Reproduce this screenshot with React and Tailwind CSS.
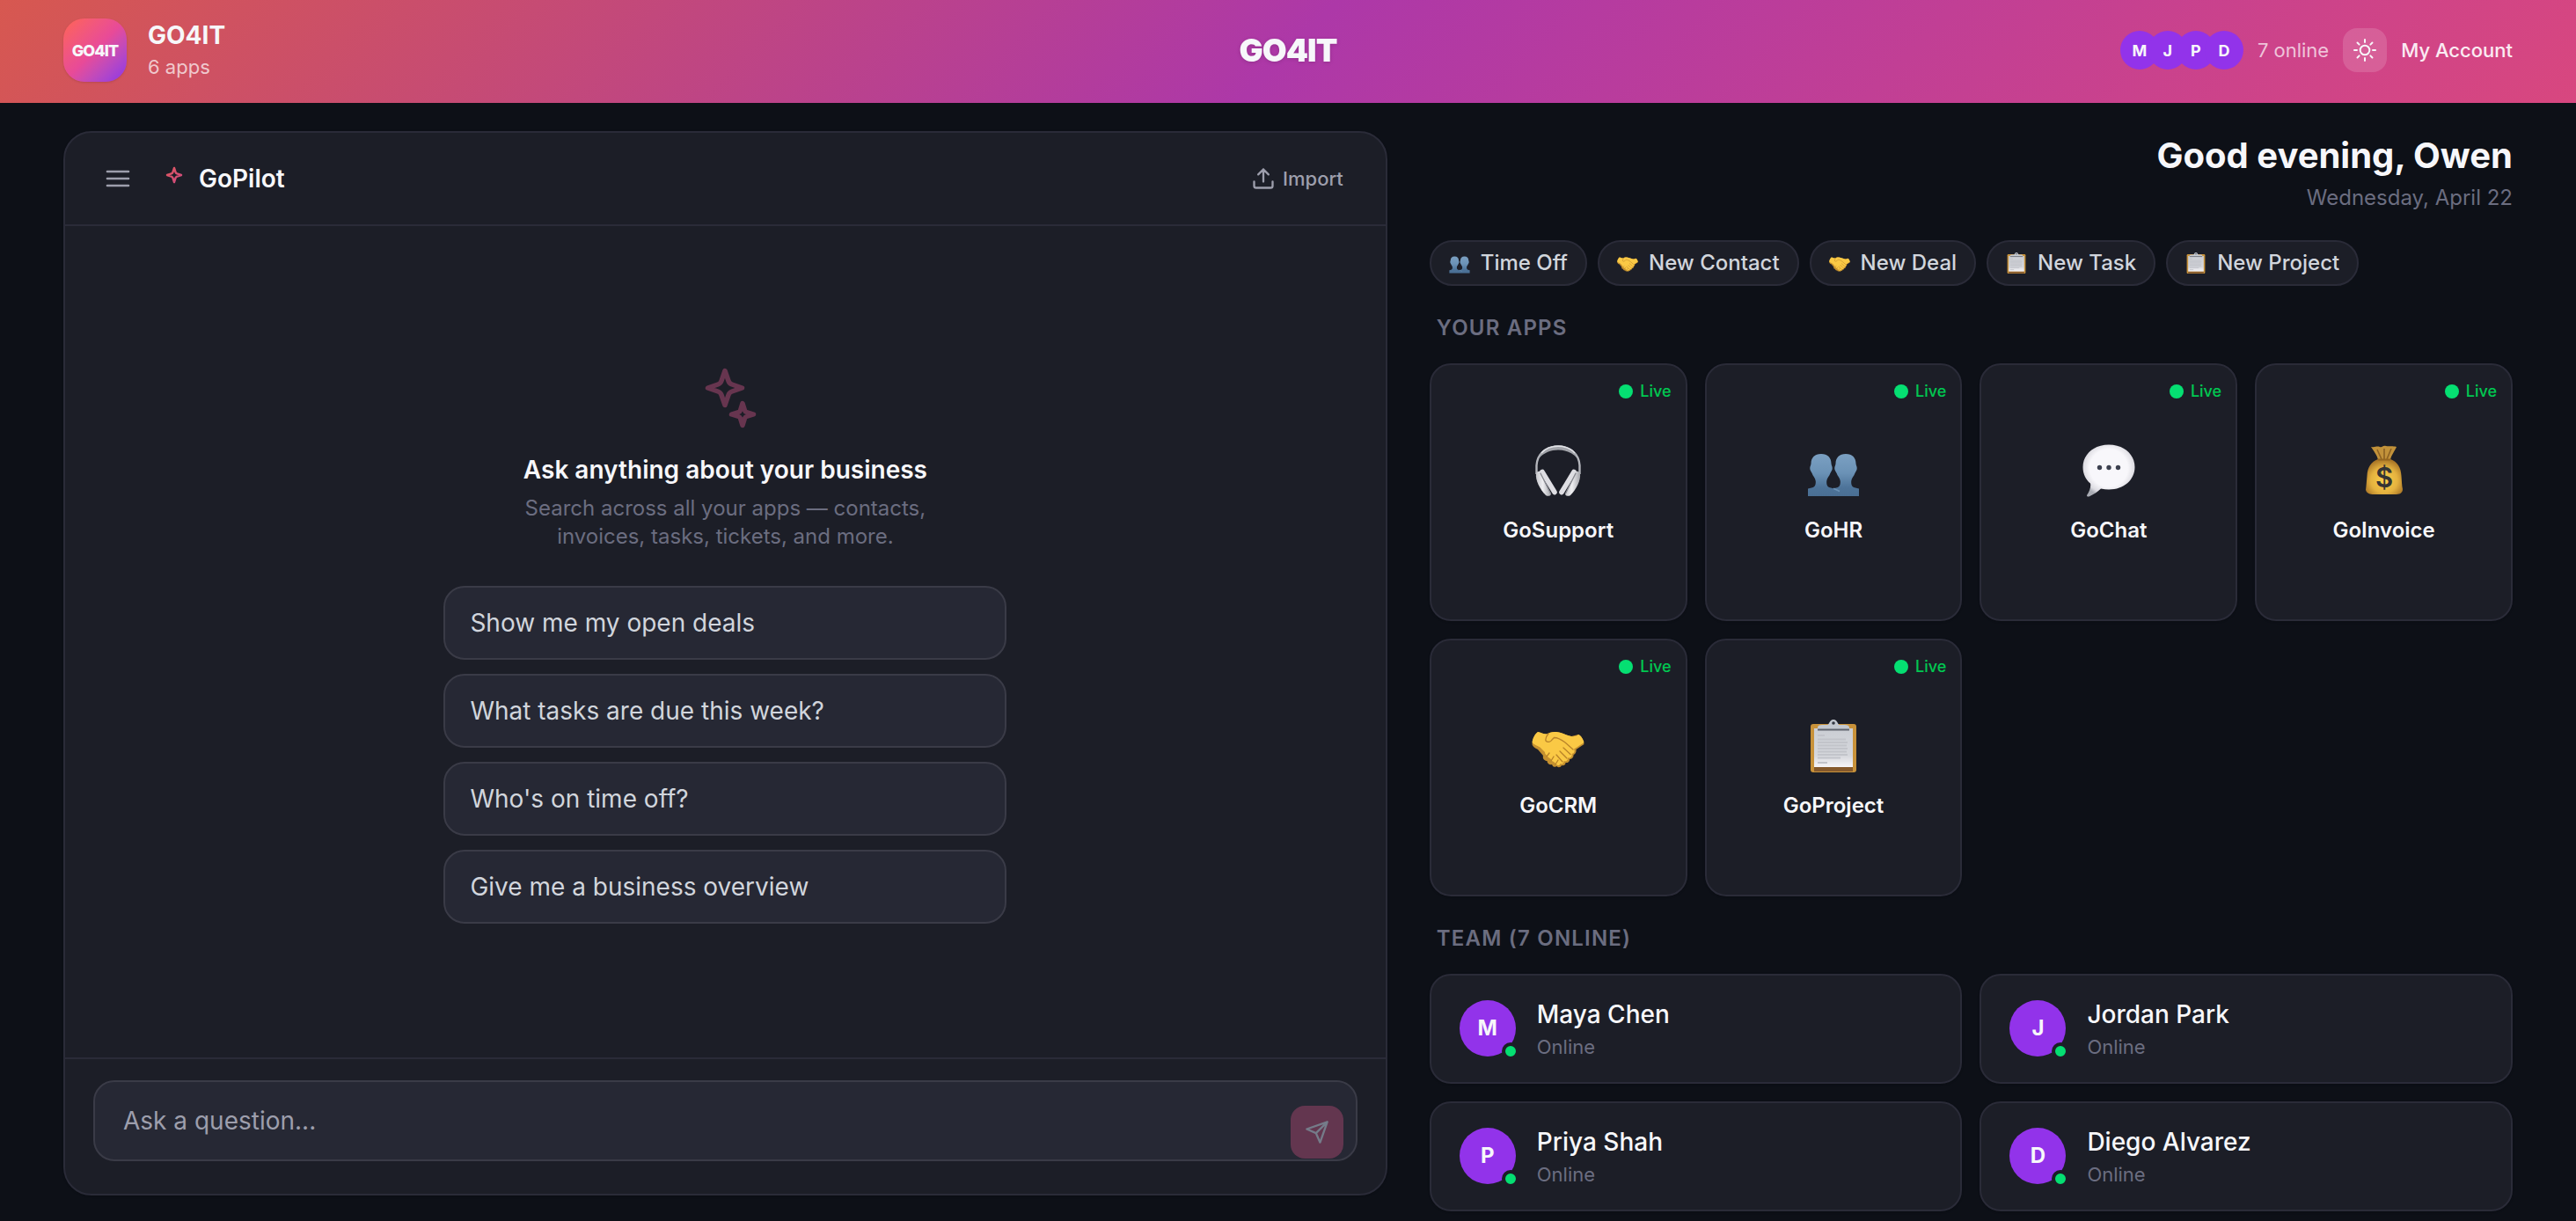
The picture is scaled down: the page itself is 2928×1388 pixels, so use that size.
import React, { useState } from 'react';

/* App artwork */

const PeopleIcon = ({ className }) => (
  <svg viewBox="0 0 60 60" className={className} aria-hidden="true">
    <defs>
      <linearGradient id="people" x1="0" y1="0" x2="0" y2="1">
        <stop offset="0" stopColor="#7ba0c2" />
        <stop offset="0.45" stopColor="#6b92b6" />
        <stop offset="0.8" stopColor="#4d7399" />
        <stop offset="1" stopColor="#4a6f94" />
      </linearGradient>
    </defs>
    <path
      d="M16 11C8.500 11 4.500 15.500 4.500 22C4.500 24 3 25 3.300 28C3.500 30 4.800 31 5.600 33C6.500 36 9.500 38.500 9.800 42C10 47 8.500 48.500 6 49.300L1 50.500V59H59V50.500L54 49.300C51.500 48.500 50 47 50.200 42C50.500 38.500 53.500 36 54.400 33C55.200 31 56.500 30 56.700 28C57 25 55.500 24 55.500 22C55.500 15.500 51.500 11 44 11C36.500 11 32.500 15.500 32.500 22C32.500 24 31 25 31.300 28C31.500 30 32.800 31 33.600 33C34.500 36 37.500 38.500 37.800 42C38 47 36.500 48.500 34 49.300L30 50.300L26 49.300C23.500 48.500 22 47 22.200 42C22.500 38.500 25.500 36 26.400 33C27.200 31 28.500 30 28.700 28C29 25 27.500 24 27.500 22C27.500 15.500 23.500 11 16 11Z"
      fill="url(#people)"
    />
    <path d="M30 50.300L37 53.500" stroke="#6b92b6" strokeWidth="1.500" />
  </svg>
);

const HandshakeIcon = ({ className }) => (
  <svg viewBox="0 0 60 60" className={className} aria-hidden="true">
    <path
      d="M7 14C4 16 1 22 0.500 28C1 31 5 33 7 34L13 41C12 45 15 47 17.500 47C17.500 50 20.500 52 23 51C24 54 27 54.500 28.500 53C30 55 33 54.500 34 52C36 53 38.500 51.500 38.500 49C41.500 49.500 43.500 47 43 45C46 45 48 42.500 47.500 40C50 39.500 51 36 50.500 34L59.500 28C59 23 56 18 53 17L45 19C40 18 35 15 28 14C23 13.500 20 15 17 16.500C14 16.500 11 15 7 14Z"
      fill="#c4902f"
    />
    <path
      d="M7 14C4 16 1 21 0.500 26C3 29 8 30 10 32L15 37C15 40 17 40 18 42C20 44 22 44 23 47C25 48 27 49 28 51C30 53 32 52 32.500 50C35 51 37 49.500 36.500 47C39 48 41.500 46 41 43.500C44 44 46.500 41.500 45.500 39C48 39 49.500 36 48 33.500L52 31L59.500 26C58.500 22 56 18 53 17C51 19 48 19.500 45 19C40 18 35 15 28 14C23 13.500 20 15 17 16.500C14 16.500 11 15 7 14Z"
      fill="#fac945"
    />
    <path
      d="M19 16C16.500 19 15.500 22 16 24C18 26.500 21.500 25.500 23 23L25.500 20.500C30 20.500 34 23 38 26L47 34M36 32L44 39.500M32 36L40 44M28 40L35 48M17 42L20 38M22 47L25 42M27 51L30 46"
      fill="none"
      stroke="#b98329"
      strokeWidth="1.300"
      strokeLinecap="round"
    />
  </svg>
);

const ClipboardIcon = ({ className }) => (
  <svg viewBox="0 0 60 60" className={className} aria-hidden="true">
    <defs>
      <linearGradient id="paper" x1="0" y1="0" x2="0" y2="1">
        <stop offset="0" stopColor="#cbced4" />
        <stop offset="0.7" stopColor="#d5d7dc" />
        <stop offset="1" stopColor="#f6f5f8" />
      </linearGradient>
    </defs>
    <rect x="4" y="5" width="52" height="55" rx="3" fill="#c8923a" />
    <path d="M8 54H52V59H8Z" fill="#85592c" />
    <rect x="8" y="10" width="44" height="44" fill="url(#paper)" />
    <path d="M12 18H20M12 22.500H44M12 26H46M12 29.500H45M12 33H46M12 36.500H45M12 40H46M12 43.500H38M12 49H23" stroke="#c2c4ca" strokeWidth="2.200" />
    <path d="M12 12V9C12 7 14 6 17 6H23C25.500 6 25 0 30 0C35 0 34.500 6 37 6H43C46 6 48 7 48 9V12Z" fill="#c3c8d0" />
    <path d="M12 11.500H48" stroke="#60656f" strokeWidth="2" />
    <circle cx="30" cy="4" r="1.800" fill="#343842" />
  </svg>
);

const HeadphonesIcon = ({ className }) => (
  <svg viewBox="0 0 60 60" className={className} aria-hidden="true">
    <defs>
      <linearGradient id="cup" x1="0" y1="0" x2="1" y2="0">
        <stop offset="0" stopColor="#c4c5ca" />
        <stop offset="0.45" stopColor="#efeff2" />
        <stop offset="1" stopColor="#a4a5ab" />
      </linearGradient>
    </defs>
    <path d="M5.500 34V24C6.500 10.500 17 2.500 30 2.500C43 2.500 53.500 10.500 54.500 24V34" fill="none" stroke="#b4b6bc" strokeWidth="2.400" />
    <path d="M8 16C12 6 21 1.200 30 1.200C39 1.200 48 6 52 16C46 9.500 38 6.500 30 6.500C22 6.500 14 9.500 8 16Z" fill="#a2a4aa" />
    <path d="M11 10C16 4.500 23 2.300 30 2.300C37 2.300 44 4.500 49 10" fill="none" stroke="#e2e3e7" strokeWidth="1.600" />
    <path d="M5 34C4 40 9 51 16 58C18 59.500 21 59 22 57L10 31C8 30 5.500 31 5 34Z" fill="url(#cup)" />
    <path d="M12 31.500L26 54.500" stroke="#dedee3" strokeWidth="5.600" strokeLinecap="round" />
    <path d="M10 33L21.500 56" stroke="#85878e" strokeWidth="1.300" strokeLinecap="round" />
    <path d="M55 34C56 40 51 51 44 58C42 59.500 39 59 38 57L50 31C52 30 54.500 31 55 34Z" fill="url(#cup)" />
    <path d="M48 31.500L34 54.500" stroke="#dedee3" strokeWidth="5.600" strokeLinecap="round" />
    <path d="M50 33L38.500 56" stroke="#85878e" strokeWidth="1.300" strokeLinecap="round" />
  </svg>
);

const ChatIcon = ({ className }) => (
  <svg viewBox="0 0 60 60" className={className} aria-hidden="true">
    <defs>
      <radialGradient id="bubble" cx="0.5" cy="0.45" r="0.56">
        <stop offset="0.65" stopColor="#f8f7fb" />
        <stop offset="0.88" stopColor="#dddce2" />
        <stop offset="1" stopColor="#a9acb4" />
      </radialGradient>
    </defs>
    <path
      d="M30 0.500C13 0.500 0.500 11.500 0.500 26C0.500 34 4 40.500 9 44.500C10 48 8 54 5 58C5 59.500 6.500 59.800 8 59.200C13 57 18 53.500 21 50.500C24 51.200 27 51.500 30 51.500C47 51.500 59.500 40.500 59.500 26C59.500 11.500 47 0.500 30 0.500Z"
      fill="url(#bubble)"
    />
    <circle cx="19.500" cy="26.500" r="2.700" fill="#3d4150" />
    <circle cx="30" cy="26.500" r="2.700" fill="#3d4150" />
    <circle cx="40.500" cy="26.500" r="2.700" fill="#3d4150" />
  </svg>
);

const MoneyIcon = ({ className }) => (
  <svg viewBox="0 0 60 60" className={className} aria-hidden="true">
    <defs>
      <radialGradient id="sack" cx="0.5" cy="0.6" r="0.6">
        <stop offset="0" stopColor="#fbd04a" />
        <stop offset="0.6" stopColor="#e5b23f" />
        <stop offset="1" stopColor="#a87426" />
      </radialGradient>
    </defs>
    <path d="M15 3C20 4 21 1.500 25 3C28 4 28 1 32 2C36 3 38 1.500 44 3C42 8 38 12 37 18H23C22 12 18 8 15 3Z" fill="#c2923a" />
    <path d="M22 6L27 17M30 5V17M38 5L33 17" stroke="#8c6123" strokeWidth="1.600" />
    <path
      d="M23 17C15 20 11 26 10.500 36C10 42 9.500 48 9 52C10 56 14 57 18 57H42C47 57 51 56 51 51C50 47 50 42 49.500 36C49 26 45 20 37 17Z"
      fill="url(#sack)"
    />
    <path d="M23 17.500H37" stroke="#95661f" strokeWidth="2" />
    <text x="30" y="49" textAnchor="middle" fontSize="31" fontWeight="600" fontFamily="Inter, sans-serif" fill="#343434">
      $
    </text>
  </svg>
);

const SparklesIcon = () => (
  <svg viewBox="0 0 80 80" className="size-20" fill="none" stroke="#67354f" strokeWidth="5.5" strokeLinejoin="round" aria-hidden="true">
    <path d="M40 11.500L44 23Q45 26 48 27L59.500 31L48 35Q45 36 44 39L40 50.500L36 39Q35 36 32 35L20.500 31L32 27Q35 26 36 23Z" />
    <path d="M60 48.500L62.500 56.500Q63 58 64.500 58.500L72.500 61L64.500 63.500Q63 64 62.500 65.500L60 73.500L57.500 65.500Q57 64 55.500 63.500L47.500 61L55.500 58.500Q57 58 57.500 56.500Z" />
  </svg>
);

const StarIcon = () => (
  <svg viewBox="0 0 36 36" className="size-9" fill="none" strokeWidth="2.4" strokeLinejoin="round" aria-hidden="true">
    <defs>
      <linearGradient id="star" x1="0" y1="0" x2="1" y2="1">
        <stop offset="0" stopColor="#e0585f" />
        <stop offset="1" stopColor="#cf4a80" />
      </linearGradient>
    </defs>
    <path stroke="url(#star)" d="M20 6L21.600 10.800Q22 12 23.200 12.400L28 14L23.200 15.600Q22 16 21.600 17.200L20 22L18.400 17.200Q18 16 16.800 15.600L12 14L16.800 12.400Q18 12 18.400 10.800Z" />
  </svg>
);

const MenuIcon = () => (
  <svg viewBox="0 0 24 24" className="size-8" fill="none" stroke="currentColor" strokeWidth="2" strokeLinecap="round" aria-hidden="true">
    <path d="M3 6h18M3 12h18M3 18h18" />
  </svg>
);

const UploadIcon = () => (
  <svg viewBox="0 0 24 24" className="size-7" fill="none" stroke="currentColor" strokeWidth="2" strokeLinecap="round" strokeLinejoin="round" aria-hidden="true">
    <path d="M21 15v4a2 2 0 0 1-2 2H5a2 2 0 0 1-2-2v-4M17 8l-5-5-5 5M12 3v12" />
  </svg>
);

const SendIcon = () => (
  <svg viewBox="0 0 24 24" className="size-7" fill="none" stroke="currentColor" strokeWidth="2" strokeLinecap="round" strokeLinejoin="round" aria-hidden="true">
    <path d="M22 2L11 13M22 2l-7 20-4-9-9-4 20-7z" />
  </svg>
);

const SunIcon = () => (
  <svg viewBox="0 0 24 24" className="size-8" fill="none" stroke="currentColor" strokeWidth="1.5" strokeLinecap="round" aria-hidden="true">
    <path d="M12 3v2.250m6.364.386-1.591 1.591M21 12h-2.250m-.386 6.364-1.591-1.591M12 18.750V21m-4.773-4.227-1.591 1.591M5.250 12H3m4.227-4.773L5.636 5.636" />
    <circle cx="12" cy="12" r="4" />
  </svg>
);

const team = [
  { name: 'Maya Chen', status: 'Online' },
  { name: 'Jordan Park', status: 'Online' },
  { name: 'Priya Shah', status: 'Online' },
  { name: 'Diego Alvarez', status: 'Online' },
];

const apps = [
  { name: 'GoSupport', Icon: HeadphonesIcon },
  { name: 'GoHR', Icon: PeopleIcon },
  { name: 'GoChat', Icon: ChatIcon },
  { name: 'GoInvoice', Icon: MoneyIcon },
  { name: 'GoCRM', Icon: HandshakeIcon },
  { name: 'GoProject', Icon: ClipboardIcon },
];

const actions = [
  { label: 'Time Off', Icon: PeopleIcon },
  { label: 'New Contact', Icon: HandshakeIcon },
  { label: 'New Deal', Icon: HandshakeIcon },
  { label: 'New Task', Icon: ClipboardIcon },
  { label: 'New Project', Icon: ClipboardIcon },
];

const suggestions = [
  'Show me my open deals',
  'What tasks are due this week?',
  "Who's on time off?",
  'Give me a business overview',
];

const Header = () => (
  <header className="grid grid-cols-[1fr_auto_1fr] items-center px-18 pt-[21px] pb-6 bg-[linear-gradient(135deg,#d75850_0%,#ad38a8_50%,#d8477f_100%)]">
    <div className="flex items-center gap-6">
      <div className="size-18 rounded-3xl shadow-sm flex items-center justify-center bg-linear-to-br from-[#ff6450] via-[#e84a98] to-[#8b2fea]">
        <span className="text-[18px] font-extrabold tracking-tighter">GO4IT</span>
      </div>
      <div>
        <p className="text-[28px] leading-[38px] font-bold">GO4IT</p>
        <p className="text-[22px] leading-[34px] text-white/70">6 apps</p>
      </div>
    </div>

    <h1 className="text-4xl font-black tracking-tight drop-shadow-sm">GO4IT</h1>

    <div className="flex items-center justify-end gap-4">
      <div className="flex -space-x-3">
        {team.map((member) => (
          <span key={member.name} className="size-11 rounded-full bg-[#9233ea] flex items-center justify-center text-[18px] font-bold">
            {member.name[0]}
          </span>
        ))}
      </div>
      <span className="text-[22px] text-white/70">7 online</span>
      <button type="button" aria-label="Toggle theme" className="size-[50px] rounded-2xl bg-white/15 flex items-center justify-center cursor-pointer">
        <SunIcon />
      </button>
      <a href="#account" className="text-[22px] font-medium text-white/90">
        My Account
      </a>
    </div>
  </header>
);

const GoPilot = () => {
  const [question, setQuestion] = useState('');

  return (
    <section className="h-[calc(100vh-178px)] flex flex-col rounded-[32px] border-2 border-[#2a2b38] bg-[#1c1e27] shadow-sm">
      <div className="h-[106px] flex items-center justify-between px-8 border-b-2 border-[#2a2b38]">
        <div className="flex items-center">
          <button type="button" aria-label="Open history" className="p-3 mr-4 text-[#9d9eac] cursor-pointer">
            <MenuIcon />
          </button>
          <StarIcon />
          <h2 className="ml-3 text-[28px] font-semibold">GoPilot</h2>
        </div>
        <button type="button" className="flex items-center gap-2 px-4 text-[22px] font-medium text-[#9d9eac] cursor-pointer">
          <UploadIcon />
          Import
        </button>
      </div>

      {/* Empty state */}
      <div className="flex-1 flex flex-col items-center justify-center">
        <SparklesIcon />
        <h3 className="mt-6 text-[28px] leading-10 font-semibold">Ask anything about your business</h3>
        <p className="mt-2 max-w-[480px] text-center text-2xl leading-8 text-[#6b6d80]">
          Search across all your apps — contacts, invoices, tasks, tickets, and more.
        </p>
        <div className="mt-10 w-full max-w-[640px] flex flex-col gap-4">
          {suggestions.map((text) => (
            <button
              key={text}
              type="button"
              onClick={() => setQuestion(text)}
              className="h-21 px-7 rounded-3xl border-2 border-[#3a3b47] bg-[#262834] text-left text-[28px] text-[#d1d5dc] cursor-pointer"
            >
              {text}
            </button>
          ))}
        </div>
      </div>

      {/* Composer */}
      <div className="border-t-2 border-[#2a2b38] px-8 pt-6 pb-[37px]">
        <div className="relative">
          <textarea
            rows={1}
            aria-label="Ask a question"
            placeholder="Ask a question..."
            value={question}
            onChange={(e) => setQuestion(e.target.value)}
            className="block w-full resize-none overflow-hidden rounded-3xl border-2 border-[#3a3b47] bg-[#262834] py-6 pl-8 pr-24 text-[28px] leading-10 text-white placeholder:text-[#9d9eac] outline-none"
          />
          <button type="button" aria-label="Send" className="absolute right-4 bottom-[3px] size-15 rounded-2xl bg-[#63364f] text-[#757b89] flex items-center justify-center cursor-pointer">
            <SendIcon />
          </button>
        </div>
      </div>
    </section>
  );
};

const AppCard = ({ name, Icon }) => (
  <a href={`#${name}`} className="relative aspect-square flex flex-col items-center justify-center gap-5 pt-2 rounded-3xl border-2 border-[#2a2b38] bg-[#1c1e27] shadow-sm">
    <span className="absolute top-4 right-4 flex items-center gap-2 text-lg font-medium text-green-500">
      <span className="size-4 rounded-full bg-green-400" />
      Live
    </span>
    <Icon className="size-15" />
    <span className="text-2xl leading-9 font-semibold">{name}</span>
  </a>
);

const TeamCard = ({ name, status }) => (
  <div className="flex items-center gap-6 px-8 py-6 rounded-3xl border-2 border-[#2a2b38] bg-[#1c1e27] shadow-sm">
    <div className="relative size-16 rounded-full bg-[#9233ea] flex items-center justify-center text-2xl font-bold">
      {name[0]}
      <span className="absolute -right-1 -bottom-1 size-5 rounded-full border-4 border-[#1c1e27] bg-green-400" />
    </div>
    <div>
      <p className="text-[28px] leading-[41px] font-medium">{name}</p>
      <p className="text-[22px] leading-8 text-[#6b6d80]">{status}</p>
    </div>
  </div>
);

const App = () => {
  return (
    <div className="min-h-screen bg-[#0d1017] text-[#f7f7fa] font-['Inter',sans-serif]">
      <Header />

      <main className="grid grid-cols-[11fr_9fr] items-start gap-12 px-18 pt-8">
        <GoPilot />

        <div>
          <div className="text-right">
            <h2 className="text-[40px] leading-[56px] font-bold">Good evening, Owen</h2>
            <p className="mt-1 text-2xl leading-8 text-[#6b6d80]">Wednesday, April 22</p>
          </div>

          {/* Quick actions */}
          <div className="mt-8 flex flex-wrap gap-3">
            {actions.map(({ label, Icon }) => (
              <button
                key={label}
                type="button"
                className="h-13 flex items-center gap-3 px-5 rounded-full border-2 border-[#2a2b38] bg-[#1c1e27] text-2xl font-medium text-[#d1d5dc] cursor-pointer"
              >
                <Icon className="size-6" />
                {label}
              </button>
            ))}
          </div>

          <h3 className="mt-8 mb-6 pl-2 text-2xl leading-8 font-semibold tracking-wider uppercase text-[#6b6d80]">Your apps</h3>
          <div className="grid grid-cols-4 gap-5">
            {apps.map((app) => (
              <AppCard key={app.name} name={app.name} Icon={app.Icon} />
            ))}
          </div>

          <h3 className="mt-8 mb-6 pl-2 text-2xl leading-8 font-semibold tracking-wider uppercase text-[#6b6d80]">Team (7 online)</h3>
          <div className="grid grid-cols-2 gap-5">
            {team.map((member) => (
              <TeamCard key={member.name} name={member.name} status={member.status} />
            ))}
          </div>
        </div>
      </main>
    </div>
  );
};

export default App;
